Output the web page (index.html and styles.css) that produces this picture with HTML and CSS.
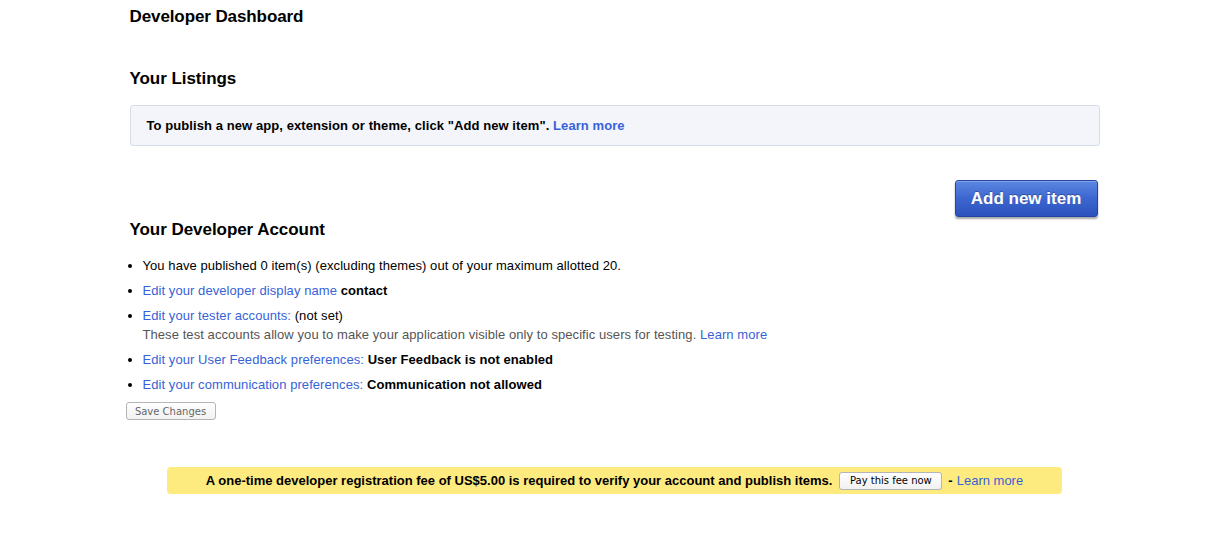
FILE: index.html
```html
<!DOCTYPE html>
<html>
<head>
<meta charset="utf-8">
<title>Developer Dashboard</title>
<link rel="stylesheet" href="styles.css">
</head>
<body>
<div class="page">
  <h1 class="title">Developer Dashboard</h1>

  <h2 class="section listings-heading">Your Listings</h2>
  <div class="info-box">To publish a new app, extension or theme, click "Add new item". <a href="#">Learn more</a></div>

  <div class="action-row">
    <button class="add-btn">Add new item</button>
  </div>

  <h2 class="section account-heading">Your Developer Account</h2>
  <ul class="account-list">
    <li>You have published 0 item(s) (excluding themes) out of your maximum allotted 20.</li>
    <li><a href="#">Edit your developer display name</a> <b>contact</b></li>
    <li><a href="#">Edit your tester accounts:</a> (not set)<br><span class="note">These test accounts allow you to make your application visible only to specific users for testing. <a href="#">Learn more</a></span></li>
    <li><a href="#">Edit your User Feedback preferences:</a> <b>User Feedback is not enabled</b></li>
    <li><a href="#">Edit your communication preferences:</a> <b>Communication not allowed</b></li>
  </ul>
  <button class="sys-btn save-btn">Save Changes</button>

  <div class="fee-bar">
    <b>A one-time developer registration fee of US$5.00 is required to verify your account and publish items.</b>
    <button class="sys-btn pay-btn">Pay this fee now</button>
    <span class="dash">-</span> <a href="#">Learn more</a>
  </div>
</div>
</body>
</html>
```

FILE: styles.css
```css
html, body {
  margin: 0;
  padding: 0;
  background: #ffffff;
}
body {
  font-family: "Liberation Sans", Arial, sans-serif;
  font-size: 13px;
  color: #000;
}
a {
  color: #3762d8;
  text-decoration: none;
}
.page {
  width: 970px;
  margin: 0 auto;
}
.title {
  font-size: 17px;
  font-weight: bold;
  line-height: 20px;
  margin: 7px 0 0;
  letter-spacing: -0.1px;
}
.section {
  font-size: 17px;
  font-weight: bold;
  line-height: 20px;
  margin: 0;
  letter-spacing: -0.05px;
}
.listings-heading {
  margin-top: 42px;
}
.info-box {
  margin-top: 16px;
  border: 1px solid #d5dcea;
  border-radius: 3px;
  background: #f3f5fa;
  padding: 0 16px;
  line-height: 39px;
  font-weight: bold;
  letter-spacing: 0.08px;
}
.action-row {
  display: flex;
  justify-content: flex-end;
  margin-top: 34px;
  padding-right: 2px;
}
.add-btn {
  width: 143px;
  height: 37px;
  border: 1px solid #2545a6;
  border-radius: 3px;
  background: linear-gradient(#5b87e2, #3c66cf 50%, #2c52bd);
  box-shadow: 0 2px 2px rgba(0, 0, 0, 0.35), inset 0 1px 0 rgba(255, 255, 255, 0.25);
  color: #fff;
  font-family: "Liberation Sans", Arial, sans-serif;
  font-size: 17px;
  font-weight: bold;
  padding: 0;
  text-shadow: 0 -1px 0 rgba(0, 0, 0, 0.3);
}
.account-heading {
  margin-top: 3px;
}
.account-list {
  margin: 16px 0 0;
  padding-left: 13px;
  list-style: disc;
  letter-spacing: 0.07px;
}
.account-list li {
  line-height: 19px;
  margin-bottom: 6px;
}
.account-list li:last-child {
  margin-bottom: 0;
}
.note {
  color: #555;
}
.sys-btn {
  font-family: "DejaVu Sans", sans-serif;
  font-size: 10px;
  color: #444;
  background: linear-gradient(#ffffff, #f1f1f1);
  border: 1px solid #b5b5b5;
  border-radius: 3px;
  padding: 0 7px;
  height: 18px;
}
.save-btn {
  display: block;
  margin: 8px 0 0 -4px;
  width: 90px;
  color: #666;
}
.fee-bar {
  width: 895px;
  margin: 47px auto 0;
  height: 27px;
  background: #feeb7f;
  border-radius: 4px;
  display: flex;
  align-items: center;
  justify-content: center;
  gap: 0;
}
.fee-bar b {
  margin-right: 7px;
}
.pay-btn {
  width: 103px;
  color: #000;
  margin-right: 6px;
}
.dash {
  font-weight: bold;
  margin-right: 4px;
}
```
